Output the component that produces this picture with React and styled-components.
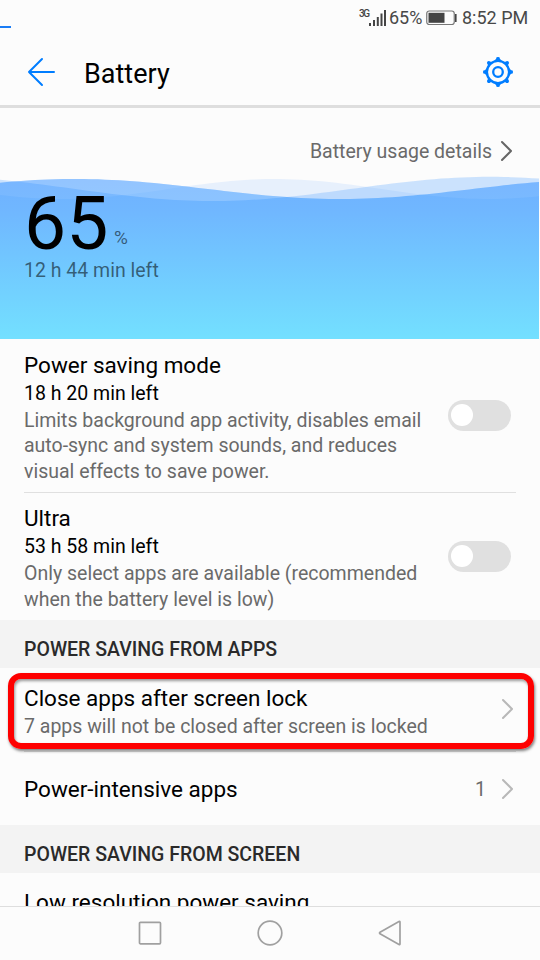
import React from "react";
import styled, { createGlobalStyle } from "styled-components";

const GlobalStyle = createGlobalStyle`
  *, *::before, *::after { box-sizing: border-box; }
  html, body { margin: 0; padding: 0; background: #fcfcfc; }
  body { font-family: Roboto, "Liberation Sans", sans-serif; color: #000; overflow: hidden; }
  svg { display: block; flex: none; }
`;

const Screen = styled.div`
  width: 540px;
  height: 960px;
  display: flex;
  flex-direction: column;
  overflow: hidden;
  background: #fcfcfc;
`;

const StatusBar = styled.header`
  height: 38px;
  flex: none;
  display: flex;
  align-items: flex-start;
  justify-content: space-between;
`;

const LoadingDash = styled.div`
  width: 10.5px;
  height: 2px;
  margin-top: 26px;
  background: #1a7cf5;
`;

const StatusItems = styled.div`
  display: flex;
  padding: 5px 12px 0 0;
  height: 31px;
`;

const StatusText = styled.span`
  font-size: 18px;
  line-height: 26px;
  color: #484848;
  white-space: nowrap;
  width: ${(p) => p.$width}px;
  margin-left: ${(p) => p.$gap}px;
`;

const NetworkLabel = styled.span`
  font-size: 10px;
  line-height: 12px;
  font-weight: 500;
  color: #444;
  width: 9px;
  margin-top: 3px;
  margin-left: -1px;
  letter-spacing: -1.4px;
`;

const SignalSlot = styled.span`
  margin: 4px 0 0 1px;
`;

const BatterySlot = styled.span`
  margin: 5px 0 0 4px;
`;

const AppBar = styled.div`
  height: 70px;
  flex: none;
  display: flex;
  align-items: center;
  padding: 0 26px 0 27px;
  border-bottom: 3px solid #dedede;
`;

const Title = styled.h1`
  flex: 1;
  margin: 0 0 0 28px;
  padding-top: 4px;
  font-size: 27px;
  line-height: 32px;
  font-weight: 400;
`;

const Hero = styled.section`
  position: relative;
  height: 231px;
  flex: none;
  padding: 28px 24px 0;
`;

const WaveArt = styled.svg`
  position: absolute;
  left: 0;
  bottom: 0;
`;

const HeroContent = styled.div`
  position: relative;
`;

const DetailsLink = styled.div`
  display: flex;
  justify-content: flex-end;
  align-items: center;
  gap: 8px;
  height: 30px;
  padding-right: 1px;
  font-size: 19.5px;
  color: #6a6a6a;
`;

const Level = styled.div`
  display: flex;
  align-items: flex-start;
  height: 91px;
  padding-top: 23px;
`;

const LevelValue = styled.span`
  font-size: 75px;
  line-height: 69px;
  width: 90px;
`;

const LevelUnit = styled.span`
  font-size: 19px;
  line-height: 24px;
  margin-top: 37px;
  color: rgba(0, 0, 0, 0.55);
`;

const TimeLeft = styled.div`
  font-size: 19.5px;
  line-height: 28px;
  color: rgba(0, 0, 0, 0.55);
`;

const List = styled.main`
  flex: 1;
  min-height: 0;
  overflow: hidden;
  display: flex;
  flex-direction: column;
`;

const Row = styled.div`
  position: relative;
  flex: none;
  height: ${(p) => p.$height}px;
  margin: 0 24px;
  display: flex;
  align-items: ${(p) => p.$align || "center"};
  border-bottom: ${(p) => (p.$divider ? "1px solid #e0e0e0" : "none")};
`;

const RowBody = styled.div`
  flex: 1;
  align-self: ${(p) => (p.$top ? "flex-start" : "center")};
  padding-top: ${(p) => p.$top || 0}px;
`;

const RowTitle = styled.div`
  font-size: 22.5px;
  line-height: 30px;
  white-space: nowrap;
`;

const RowTime = styled.div`
  font-size: 19.5px;
  line-height: 28px;
`;

const Description = styled.div`
  font-size: 19.5px;
  line-height: 25.5px;
  color: #6a6a6a;
  white-space: pre-line;
`;

const RowNote = styled(Description)`
  line-height: 28px;
`;

const Count = styled.span`
  font-size: 19.5px;
  color: #6a6a6a;
  margin-right: 15px;
  padding-top: 1px;
`;

const ChevronIcon = styled.svg`
  margin-right: 1px;
`;

const SectionHeader = styled.h2`
  flex: none;
  height: 47.5px;
  margin: 0;
  padding: 18px 24px 0;
  font-size: 19.5px;
  line-height: 24px;
  font-weight: 500;
  white-space: nowrap;
  color: #2a2a2a;
  background: #f3f3f3;
`;

const SwitchTrack = styled.div`
  width: 63px;
  height: 30.5px;
  margin: ${(p) => p.$top}px 4.8px 0 0;
  padding: 4px 3px;
  border-radius: 15.5px;
  background: #e0e0e0;
`;

const SwitchThumb = styled.div`
  width: 22px;
  height: 22px;
  border-radius: 50%;
  background: #fff;
`;

const Highlight = styled.div`
  position: absolute;
  left: -16.5px;
  right: -17.5px;
  top: 5px;
  height: 76.5px;
  border: 6px solid #fe0000;
  border-radius: 13px;
  box-shadow: 1px 2px 3px rgba(0, 0, 0, 0.5), inset 1px 2px 3px rgba(0, 0, 0, 0.4);
`;

const NavBar = styled.nav`
  flex: none;
  height: 54px;
  border-top: 1px solid #dedede;
  display: flex;
  justify-content: center;
  align-items: center;
  gap: 94px;
  padding-bottom: 1px;
`;

const WAVE_TOP = 170;
const WAVE_HEIGHT = 169;

// Samples a cosine crest into SVG line segments across the screen width.
function crest(peak, period, mid, amp) {
  const points = [];
  for (let x = 0; x <= 539; x += 7) {
    const y = mid - WAVE_TOP - amp * Math.cos((2 * Math.PI * (x - peak)) / period);
    points.push(`${x} ${y.toFixed(2)}`);
  }
  return "M" + points.join("L");
}

const front = crest(75, 530, 189, 10);
const middle = crest(490, 554, 188.9, 12.1);
const back = crest(275, 425, 189, 10);
const below = `V${WAVE_HEIGHT}H0Z`;
const above = "V0H0Z";

const Waves = () => (
  <WaveArt width="539" height={WAVE_HEIGHT} viewBox={`0 0 539 ${WAVE_HEIGHT}`}>
    <defs>
      <linearGradient id="water" x1="0" y1="10" x2="0" y2={WAVE_HEIGHT} gradientUnits="userSpaceOnUse">
        <stop offset="0" stopColor="#6fb1ff" />
        <stop offset="0.2" stopColor="#70b7ff" />
        <stop offset="1" stopColor="#73e0ff" />
      </linearGradient>
      <clipPath id="frontWave"><path d={front + below} /></clipPath>
    </defs>
    <path d={back + below} fill="#6fb1ff" fillOpacity="0.15" />
    <path d={middle + below} fill="#6fb1ff" fillOpacity="0.35" />
    <path d={front + below} fill="url(#water)" />
    <g clipPath="url(#frontWave)" fill="#fff">
      <path d={middle + above} fillOpacity="0.2" />
      <path d={back + above} fillOpacity="0.07" />
    </g>
  </WaveArt>
);

const Chevron = ({ color }) => (
  <ChevronIcon width="14" height="22" viewBox="0 0 14 22" fill="none" stroke={color} strokeWidth="2" strokeLinejoin="round">
    <path d="M2 2L11 11L2 20" strokeLinecap="round" />
  </ChevronIcon>
);

const Signal = () => (
  <svg width="18" height="18" viewBox="0 0 18 18" fill="#444">
    <rect x="0" y="14" width="2" height="3" />
    <rect x="4" y="11" width="2" height="6" />
    <rect x="7.8" y="8" width="2" height="9" />
    <rect x="11.5" y="4.5" width="2" height="12.5" />
    <rect x="15" y="1" width="2" height="16" />
  </svg>
);

const BatteryIcon = () => (
  <svg width="32" height="16" viewBox="0 0 32 16">
    <rect x="0.75" y="1" width="27.5" height="13.5" rx="2.5" fill="none" stroke="#777" strokeWidth="1.2" />
    <rect x="2.5" y="2.8" width="16" height="10" fill="#444" />
    <rect x="29" y="4" width="1.6" height="8" fill="#444" />
  </svg>
);

const BackArrow = () => (
  <svg width="29" height="30" viewBox="0 0 29 30" fill="none" stroke="#007dff" strokeWidth="2" strokeLinecap="round" strokeLinejoin="round">
    <path d="M27 15H2M15 2L2 15L15 28" />
  </svg>
);

const Gear = () => (
  <svg width="32" height="32" viewBox="-16 -16 32 32">
    <g fill="#007dff">
      {[0, 45, 90, 135, 180, 225, 270, 315].map((a) => (
        <path
          key={a}
          d={a % 90 === 0
            ? "M-4 -11L-1.8 -13.2V-14Q-1.8 -15 0 -15Q1.8 -15 1.8 -14V-13.2L4 -11Z"
            : "M-2.8 -10.5L-2 -12.4Q-1.8 -14.9 0 -14.9Q1.8 -14.9 2 -12.4L2.8 -10.5Z"}
          transform={`rotate(${a})`}
        />
      ))}
    </g>
    <g fill="none" stroke="#007dff" strokeWidth="2.3">
      <circle r="11.1" />
      <circle r="4.8" />
    </g>
  </svg>
);

const Switch = ({ top }) => (
  <SwitchTrack $top={top}><SwitchThumb /></SwitchTrack>
);

const navStroke = { fill: "none", stroke: "#a0a0a0", strokeWidth: 1.7, strokeLinejoin: "round" };

export default function App() {
  return (
    <Screen>
      <GlobalStyle />
      <StatusBar>
        <LoadingDash />
        <StatusItems>
          <NetworkLabel>3G</NetworkLabel>
          <SignalSlot><Signal /></SignalSlot>
          <StatusText $width={33} $gap={2}>65%</StatusText>
          <BatterySlot><BatteryIcon /></BatterySlot>
          <StatusText $width={66} $gap={4}>8:52 PM</StatusText>
        </StatusItems>
      </StatusBar>
      <AppBar>
        <BackArrow />
        <Title>Battery</Title>
        <Gear />
      </AppBar>
      <Hero>
        <Waves />
        <HeroContent>
          <DetailsLink>Battery usage details<Chevron color="#666" /></DetailsLink>
          <Level><LevelValue>65</LevelValue><LevelUnit>%</LevelUnit></Level>
          <TimeLeft>12 h 44 min left</TimeLeft>
        </HeroContent>
      </Hero>
      <List>
        <Row $height={154} $align="flex-start" $divider>
          <RowBody $top={10.5}>
            <RowTitle>Power saving mode</RowTitle>
            <RowTime>18 h 20 min left</RowTime>
            <Description>{"Limits background app activity, disables email\nauto-sync and system sounds, and reduces\nvisual effects to save power."}</Description>
          </RowBody>
          <Switch top={61} />
        </Row>
        <Row $height={127} $align="flex-start">
          <RowBody $top={10.4}>
            <RowTitle>Ultra</RowTitle>
            <RowTime>53 h 58 min left</RowTime>
            <Description>{"Only select apps are available (recommended\nwhen the battery level is low)"}</Description>
          </RowBody>
          <Switch top={48} />
        </Row>
        <SectionHeader>POWER SAVING FROM APPS</SectionHeader>
        <Row $height={84.5} $divider>
          <RowBody $top={15}>
            <RowTitle>Close apps after screen lock</RowTitle>
            <RowNote>7 apps will not be closed after screen is locked</RowNote>
          </RowBody>
          <Chevron color="#b8b8b8" />
          <Highlight />
        </Row>
        <Row $height={73}>
          <RowBody><RowTitle>Power-intensive apps</RowTitle></RowBody>
          <Count>1</Count>
          <Chevron color="#b8b8b8" />
        </Row>
        <SectionHeader>POWER SAVING FROM SCREEN</SectionHeader>
        <Row $height={84} $align="flex-start">
          <RowBody $top={14}><RowTitle>Low resolution power saving</RowTitle></RowBody>
        </Row>
      </List>
      <NavBar>
        <svg width="26" height="26" viewBox="0 0 26 26" {...navStroke}><rect x="2.5" y="2.3" width="21" height="21.5" rx="1" /></svg>
        <svg width="26" height="26" viewBox="0 0 26 26" {...navStroke}><circle cx="13" cy="13" r="11.8" /></svg>
        <svg width="26" height="26" viewBox="0 0 26 26" {...navStroke}><path d="M23 2.2Q23 1 22 1.5L3 12.2Q2 13 3 13.8L22 24.5Q23 25 23 23.8Z" /></svg>
      </NavBar>
    </Screen>
  );
}
